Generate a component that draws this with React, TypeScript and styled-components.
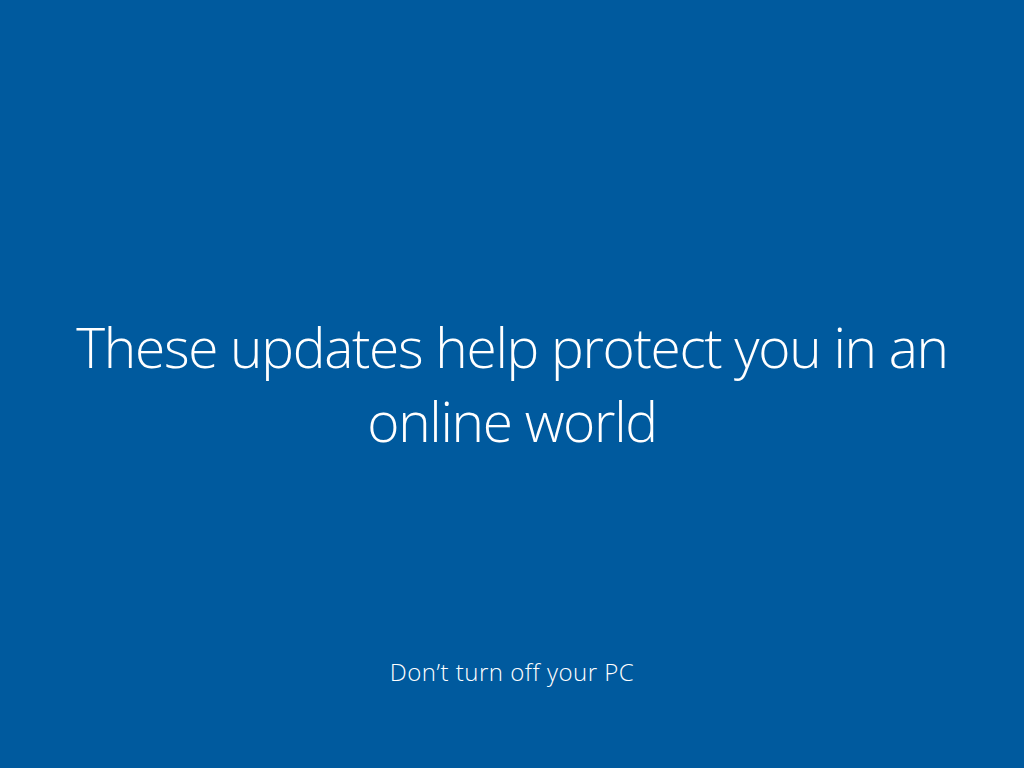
import { createGlobalStyle, styled } from "styled-components";

const GlobalStyle = createGlobalStyle`
	html, body {
		margin: 0;
		padding: 0;
		background: #005a9e;
	}
`;

const Screen = styled.div`
	display: flex;
	flex-direction: column;
	align-items: center;
	width: 100vw;
	height: 100vh;
	background: #005a9e;
	color: #fff;
	font-family: "Open Sans", "Segoe UI", sans-serif;
	font-weight: 300;
	overflow: hidden;
`;

const Middle = styled.div`
	flex: 1;
	display: flex;
	align-items: center;
	justify-content: center;
	padding-top: 112px;
`;

const Headline = styled.h1`
	margin: 0;
	width: 920px;
	text-align: center;
	font-size: 55px;
	font-weight: 300;
	letter-spacing: -1.3px;
	line-height: 74px;
`;

const Footer = styled.p`
	margin: 0 0 80px 0;
	font-size: 24px;
	font-weight: 300;
	letter-spacing: 0.5px;
`;

function App() {
	return (
		<>
			<GlobalStyle />
			<Screen>
				<Middle>
					<Headline>These updates help protect you in an online world</Headline>
				</Middle>
				<Footer>Don’t turn off your PC</Footer>
			</Screen>
		</>
	);
}

export default App;
